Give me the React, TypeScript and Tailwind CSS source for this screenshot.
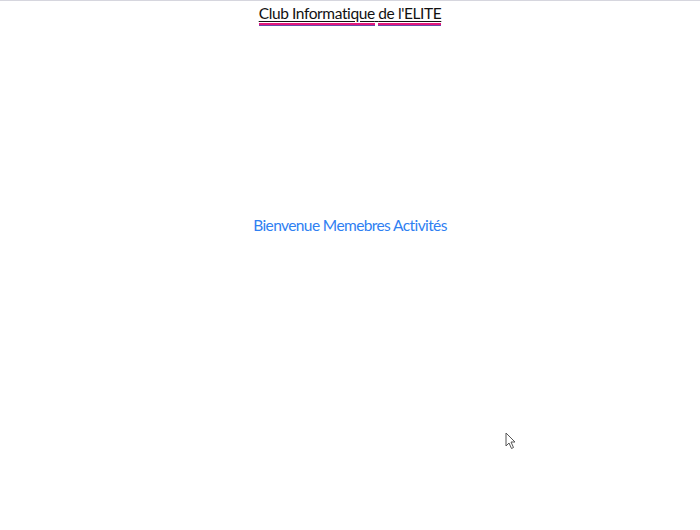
export default function App() {
  return (
    <div
      className="relative h-[530px] w-[700px] overflow-hidden border-t border-[#d6d6de] bg-white"
      style={{ fontFamily: '"Lato", "Noto Sans", sans-serif' }}
    >
      <header className="flex justify-center pt-[3px]">
        <h1 className="text-[15.5px] leading-[18px] tracking-[-0.4px] text-[#111] underline decoration-[#111] underline-offset-[2px]">
          <span className="border-b-2 border-[#e3177d] pb-[1px] shadow-[0_1px_0_#6b4aa8]">Club Informatique</span>{" "}
          <span className="border-b-2 border-[#e3177d] pb-[1px] shadow-[0_1px_0_#6b4aa8]">de l'ELITE</span>
        </h1>
      </header>
      <main className="flex justify-center pt-[193px]">
        <p className="text-[15.5px] leading-[20px] tracking-[-0.6px] text-[#2f80f2]">Bienvenue Memebres Activités</p>
      </main>
      <svg
        className="absolute left-[505px] top-[431px]"
        width="12"
        height="18"
        viewBox="0 0 12 18"
      >
        <path d="M1 1 L1 14 L4 11 L6.5 16.5 L8.5 15.5 L6 10 L10 10 Z" fill="#fff" stroke="#555" strokeWidth="1" />
      </svg>
    </div>
  );
}
